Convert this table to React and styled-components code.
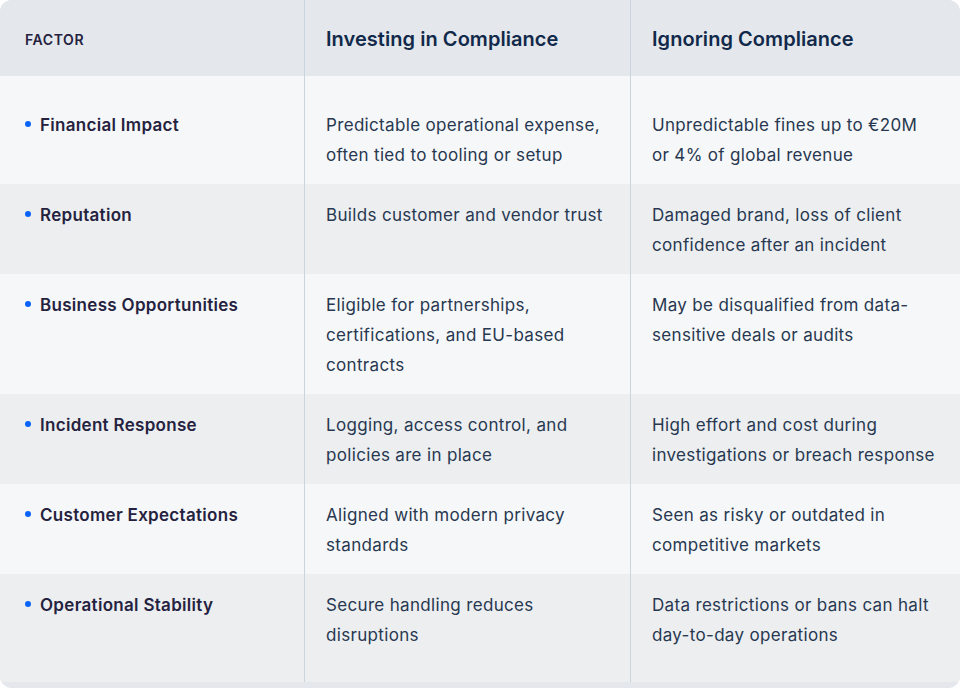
import React from 'react'
import styled, { createGlobalStyle } from 'styled-components'

const GlobalStyle = createGlobalStyle`
  html, body {
    margin: 0;
    padding: 0;
    background: #ffffff;
    font-family: Inter, "Noto Sans", "Liberation Sans", sans-serif;
    -webkit-font-smoothing: antialiased;
  }
`

const Card = styled.div`
  width: 960px;
  height: 688px;
  box-sizing: border-box;
  background: #e4e7eb;
  border-radius: 12px;
  overflow: hidden;
  padding-bottom: 6px;
  display: flex;
  flex-direction: column;
`

const Row = styled.div`
  display: grid;
  grid-template-columns: 304px 326px 1fr;
  background: ${p => p.$bg};
  flex: ${p => (p.$grow ? 1 : 'none')};
`

const HeadCell = styled.div`
  height: 76px;
  box-sizing: border-box;
  padding-top: 2px;
  display: flex;
  align-items: center;
  padding-left: ${p => (p.$first ? '25px' : '21px')};
  border-left: ${p => (p.$first ? 'none' : '1px solid #ccd4dd')};
  color: ${p => (p.$first ? '#25223f' : '#11294a')};
  font-size: ${p => (p.$first ? '14px' : '20px')};
  font-weight: 600;
  letter-spacing: ${p => (p.$first ? '0.6px' : '0.05px')};
`

const Cell = styled.div`
  padding: ${p => p.$pt}px 24px ${p => p.$pb}px ${p => (p.$first ? '25px' : '21px')};
  border-left: ${p => (p.$first ? 'none' : '1px solid #ccd4dd')};
  font-size: 17px;
  line-height: 30px;
  letter-spacing: 0.33px;
  color: #273850;
`

const Label = styled.div`
  display: flex;
  align-items: center;
  font-size: 17px;
  font-weight: 600;
  letter-spacing: 0.3px;
  color: #25223f;
  line-height: 30px;
`

const Dot = styled.span`
  width: 6px;
  height: 6px;
  border-radius: 50%;
  background: #0a63f6;
  margin-right: 9px;
  flex: none;
  position: relative;
  top: -1px;
`

const rows = [
  ['Financial Impact', 'Predictable operational expense, often tied to tooling or setup', 'Unpredictable fines up to €20M or 4% of global revenue'],
  ['Reputation', 'Builds customer and vendor trust', 'Damaged brand, loss of client confidence after an incident'],
  ['Business Opportunities', 'Eligible for partnerships, certifications, and EU-based contracts', 'May be disqualified from data-sensitive deals or audits'],
  ['Incident Response', 'Logging, access control, and policies are in place', 'High effort and cost during investigations or breach response'],
  ['Customer Expectations', 'Aligned with modern privacy standards', 'Seen as risky or outdated in competitive markets'],
  ['Operational Stability', 'Secure handling reduces disruptions', 'Data restrictions or bans can halt day-to-day operations']
]

export default function App () {
  return (
    <>
      <GlobalStyle />
      <Card>
        <Row $bg='#e4e7eb'>
          <HeadCell $first>FACTOR</HeadCell>
          <HeadCell>Investing in Compliance</HeadCell>
          <HeadCell>Ignoring Compliance</HeadCell>
        </Row>
        {rows.map((r, i) => {
          const pt = i === 0 ? 34 : 16
          const pb = 14
          const last = i === rows.length - 1
          return (
            <Row key={r[0]} $bg={i % 2 === 0 ? '#f6f7f8' : '#eceef0'} $grow={last}>
              <Cell $first $pt={pt} $pb={pb}>
                <Label><Dot />{r[0]}</Label>
              </Cell>
              <Cell $pt={pt} $pb={pb}>{r[1]}</Cell>
              <Cell $pt={pt} $pb={pb}>{r[2]}</Cell>
            </Row>
          )
        })}
      </Card>
    </>
  )
}
